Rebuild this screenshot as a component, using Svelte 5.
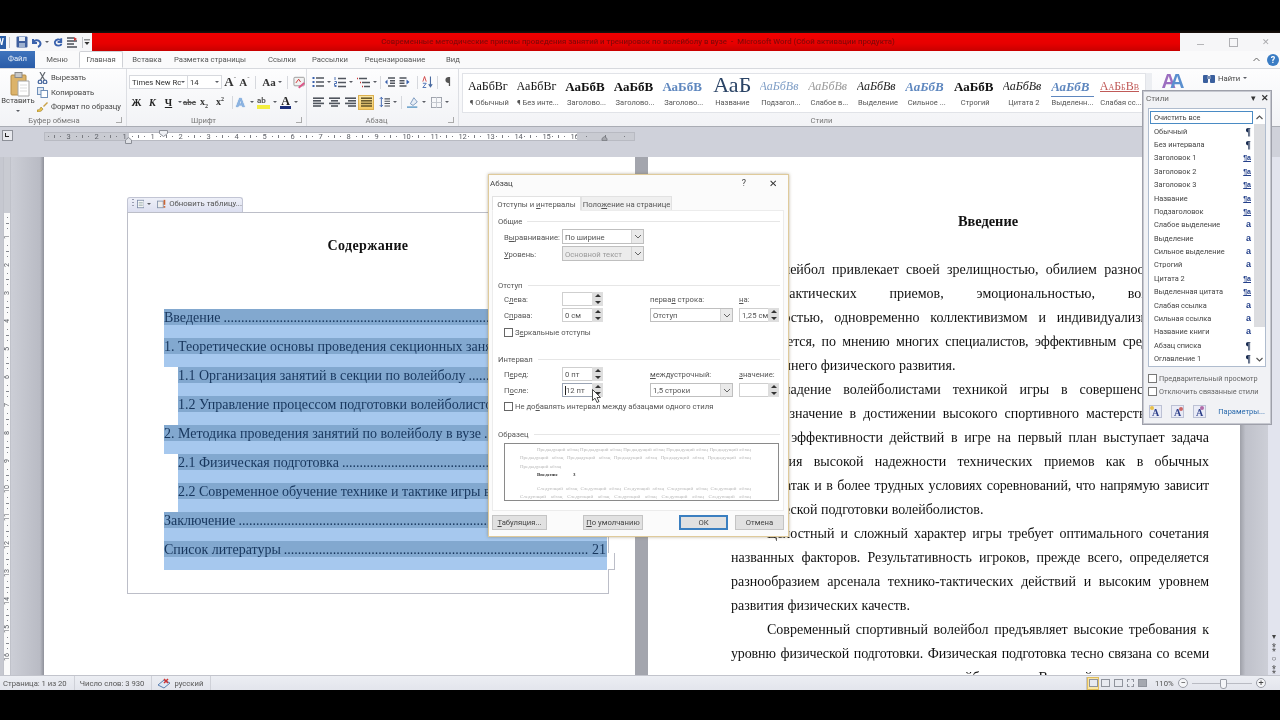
<script>
  const tabs = ['Меню', 'Главная', 'Вставка', 'Разметка страницы', 'Ссылки', 'Рассылки', 'Рецензирование', 'Вид'];
  const gallery = [
    ['АаБбВг', 'g-norm', '¶ Обычный'], ['АаБбВг', 'g-norm', '¶ Без инте...'],
    ['АаБбВ', 'g-bold', 'Заголово...'], ['АаБбВ', 'g-bold', 'Заголово...'],
    ['АаБбВ', 'g-blue', 'Заголово...'], ['АаБ', 'g-title', 'Название'],
    ['АаБбВв', 'g-sub', 'Подзагол...'], ['АаБбВв', 'g-weak', 'Слабое в...'],
    ['АаБбВв', 'g-em', 'Выделение'], ['АаБбВ', 'g-strong', 'Сильное ...'],
    ['АаБбВ', 'g-bold', 'Строгий'], ['АаБбВв', 'g-em', 'Цитата 2'],
    ['АаБбВ', 'g-quote', 'Выделенн...'], ['АаБбВв', 'g-ref', 'Слабая сс...']
  ];
  const rulerLeft = [3, 2, 1];
  const rulerMain = Array.from({ length: 16 }, (_, i) => i + 1);
  const vertical = Array.from({ length: 16 }, (_, i) => i + 1);
  const dots = '.'.repeat(130);
  const toc = [
    ['Введение', 0, '3'], ['1. Теоретические основы проведения секционных занятий', 0, '5'],
    ['1.1 Организация занятий в секции по волейболу', 1, '5'],
    ['1.2 Управление процессом подготовки волейболистов', 1, '8'],
    ['2. Методика проведения занятий по волейболу в вузе', 0, '11'],
    ['2.1 Физическая подготовка', 1, '11'],
    ['2.2 Современное обучение технике и тактике игры в волейбол', 1, '14'],
    ['Заключение', 0, '19'], ['Список литературы', 0, '21']
  ];
  const body = [
    ['Волейбол привлекает своей зрелищностью, обилием разнообразных и', 1, 1, 0],
    ['технико-тактических приемов, эмоциональностью, воздействием', 0, 1, 0],
    ['подвижностью, одновременно коллективизмом и индивидуализмом игры.', 0, 1, 0],
    ['Он считается, по мнению многих специалистов, эффективным средством для', 0, 1, 1],
    ['всестороннего физического развития.', 0, 0, 0],
    ['Овладение волейболистами техникой игры в совершенстве имеет', 1, 1, 0],
    ['большое значение в достижении высокого спортивного мастерства игроков.', 0, 1, 0],
    ['С целью эффективности действий в игре на первый план выступает задача', 0, 1, 0],
    ['достижения высокой надежности технических приемов как в обычных', 0, 1, 0],
    ['игровых атак и в более трудных условиях соревнований, что напрямую зависит', 0, 1, 1],
    ['от физической подготовки волейболистов.', 0, 0, 0],
    ['Целостный и сложный характер игры требует оптимального сочетания', 1, 1, 0],
    ['названных факторов. Результативность игроков, прежде всего, определяется', 0, 1, 0],
    ['разнообразием арсенала технико-тактических действий и высоким уровнем', 0, 1, 0],
    ['развития физических качеств.', 0, 0, 0],
    ['Современный спортивный волейбол предъявляет высокие требования к', 1, 1, 0],
    ['уровню физической подготовки. Физическая подготовка тесно связана со всеми', 0, 1, 1],
    ['другими сторонами тренировки волейболистов. Высокий уровень развития', 0, 1, 0]
  ];
  const styles = [
    ['Очистить все', ''], ['Обычный', 'p'], ['Без интервала', 'p'], ['Заголовок 1', 'l'], ['Заголовок 2', 'l'],
    ['Заголовок 3', 'l'], ['Название', 'l'], ['Подзаголовок', 'l'], ['Слабое выделение', 'a'], ['Выделение', 'a'],
    ['Сильное выделение', 'a'], ['Строгий', 'a'], ['Цитата 2', 'l'], ['Выделенная цитата', 'l'], ['Слабая ссылка', 'a'],
    ['Сильная ссылка', 'a'], ['Название книги', 'a'], ['Абзац списка', 'p'], ['Оглавление 1', 'p']
  ];
  const prev = 'Предыдущий абзац Предыдущий абзац Предыдущий абзац Предыдущий абзац Предыдущий абзац';
  const next = 'Следующий абзац Следующий абзац Следующий абзац Следующий абзац Следующий абзац';
</script>

{#snippet spin()}
  <span class="spin"><i class="up"></i><i class="down"></i></span>
{/snippet}
{#snippet chev()}
  <span class="chev"><svg width="8" height="5" viewBox="0 0 8 5"><path d="M1 1l3 3 3-3" fill="none" stroke="#666" stroke-width="1"/></svg></span>
{/snippet}
{#snippet align(kind)}
  <svg width="11" height="10" viewBox="0 0 11 10">
    {#each [0, 1, 2, 3] as i}
      <rect x={kind === 'c' ? (i % 2 ? 2 : 0) : kind === 'r' ? (i % 2 ? 3 : 0) : 0} y={i * 2.6 + 0.4} width={kind === 'j' ? 11 : i % 2 ? (kind === 'c' ? 7 : 8) : 11} height="1.6" fill={kind === 'j' ? '#6a5a2c' : '#50555e'}/>
    {/each}
  </svg>
{/snippet}

<div class="root">
  <div class="blackTop"></div>

  <header class="titlebar">
    <div class="qat">
      <span class="wlogo">W</span><i class="qsep q1"></i>
      <svg class="q2" width="12" height="12" viewBox="0 0 12 12"><rect x="0.5" y="0.5" width="11" height="11" rx="1" fill="#3f5f9e"/><rect x="3" y="1" width="6" height="4" fill="#e6ebf3"/><rect x="3" y="7" width="6" height="4" fill="#9db0cf"/></svg>
      <svg class="q3" width="12" height="12" viewBox="0 0 12 12"><path d="M3 3v4h4M3 7c1-3 5-4 7-1 1 2 0 4-2 5" fill="none" stroke="#3a62ad" stroke-width="2"/></svg>
      <i class="caret dark q4"></i>
      <svg class="q5" width="11" height="12" viewBox="0 0 12 12"><path d="M9 2v4H5M9 5C7 2 3 3 2 6c0 2 1 4 4 4 2 0 3-1 3-2" fill="none" stroke="#3a62ad" stroke-width="2"/></svg>
      <svg class="q3" width="12" height="12" viewBox="0 0 12 12"><path d="M1 2h7M1 5h10M1 8h7M1 11h10" stroke="#4a4f58" stroke-width="1.3"/><path d="M8 1l3 2-3 2z" fill="#c33"/></svg>
      <i class="qsep q6"></i>
      <svg class="q7" width="6" height="8" viewBox="0 0 7 8"><path d="M0 1h7v1H0zM0.5 4h6L3.5 7.5z" fill="#333"/></svg>
    </div>
    <div class="redbar">Современные методические приемы проведения занятий и тренировок по волейболу в вузе  -  Microsoft Word (Сбой активации продукта)</div>
    <div class="winbtns">
      <span class="wb min"></span>
      <span class="wb max"></span>
      <span class="wb cls">✕</span>
    </div>
  </header>

  <nav class="tabs">
    <span class="file">Файл</span>
    {#each tabs as t, i}
      <span class="tab t{i}" class:active={t === 'Главная'}>{t}</span>
    {/each}
    <span class="helpzone"><svg width="7" height="5" viewBox="0 0 7 5"><path d="M0.5 4L3.5 1l3 3" fill="none" stroke="#666"/></svg><span class="help">?</span></span>
  </nav>

  <section class="ribbon">
    <div class="grp clip">
      <div class="grpbody clipbody">
        <div class="paste">
          <svg width="20" height="26" viewBox="0 0 20 26"><rect x="1" y="3" width="15" height="20" rx="1" fill="#dcb36a" stroke="#b58b45"/><rect x="5" y="0.5" width="7" height="5" fill="#c7c7c7" stroke="#8a8a8a"/><path d="M8 9h11v15H8z" fill="#fff" stroke="#a5a5a5"/><path d="M10 13h7M10 16h7M10 19h7" stroke="#ddd"/></svg>
          <span>Вставить</span>
          <i class="caret dark"></i>
        </div>
        <div class="clipcol">
          <span class="ci"><svg width="11" height="12" viewBox="0 0 11 12"><circle cx="3" cy="10" r="1.8" fill="none" stroke="#4a6aa0" stroke-width="1.3"/><circle cx="8" cy="10" r="1.8" fill="none" stroke="#4a6aa0" stroke-width="1.3"/><path d="M3.5 8L8 0M7.5 8L3 0" stroke="#60666e" stroke-width="1.2"/></svg>Вырезать</span>
          <span class="ci"><svg width="11" height="11" viewBox="0 0 11 11"><rect x="0.5" y="0.5" width="6" height="7" fill="#dfe8f4" stroke="#6f8fb8"/><rect x="4" y="3.5" width="6.5" height="7" fill="#fff" stroke="#6f8fb8"/></svg>Копировать</span>
          <span class="ci"><svg width="11" height="11" viewBox="0 0 11 11"><path d="M6 5l4-4 1 1-4 4z" fill="#c9a24a"/><path d="M0 9c2 0 3-1 4-3l2 2c-1 2-3 3-6 3z" fill="#e8c14a" stroke="#8a6d20" stroke-width="0.5"/></svg>Формат по образцу</span>
        </div>
      </div>
      <div class="grplabel">Буфер обмена<i class="launch"></i></div>
    </div>

    <div class="grp font">
      <div class="grpbody col">
        <div class="row f1">
          <span class="combo fname">Times New Rc<i class="caret dark"></i></span>
          <span class="combo fsize">14<i class="caret dark"></i></span>
          <span class="bigA">A<sup>ˆ</sup></span>
          <span class="smA">A<sup>ˇ</sup></span>
          <i class="vsep m3"></i>
          <span class="aa">Aa<i class="caret dark"></i></span>
          <i class="vsep m3"></i>
          <svg class="clr" width="14" height="13" viewBox="0 0 14 13"><rect x="1" y="1" width="11" height="9" rx="1" fill="#f2f2f2" stroke="#999"/><path d="M3 7l3-4 2 3" fill="none" stroke="#c33"/><path d="M6 12l6-5" stroke="#d58" stroke-width="2"/></svg>
        </div>
        <div class="row f2">
          <b class="fb">Ж</b><b class="fb it">К</b><b class="fb un">Ч</b><i class="caret dark"></i>
          <span class="abc">abe</span><span class="xs">x<sub>2</sub></span><span class="xs">x<sup>2</sup></span>
          <i class="vsep"></i>
          <span class="eff">A</span><i class="caret dark"></i>
          <span class="hl">ab<i></i></span><i class="caret dark"></i>
          <span class="fcol">A<i></i></span><i class="caret dark"></i>
        </div>
      </div>
      <div class="grplabel">Шрифт<i class="launch"></i></div>
    </div>

    <div class="grp para">
      <div class="grpbody col">
        <div class="row pr1">
          <span class="pi w22"><svg width="12" height="10" viewBox="0 0 12 10"><path d="M4 1h8M4 5h8M4 9h8" stroke="#50555e" stroke-width="1.5"/><path d="M0.5 1h2M0.5 5h2M0.5 9h2" stroke="#3a62ad" stroke-width="2"/></svg><i class="caret dark"></i></span>
          <span class="pi w23"><svg width="12" height="11" viewBox="0 0 12 11"><path d="M4 1.5h8M4 5.5h8M4 9.5h8" stroke="#50555e" stroke-width="1.5"/><path d="M1 0v3M0.5 4.5h2v2h-2v2h2M0.5 9.5h2" stroke="#3a62ad" stroke-width="0.9" fill="none"/></svg><i class="caret dark"></i></span>
          <span class="pi w23"><svg width="13" height="11" viewBox="0 0 13 11"><path d="M2 1.5h8M5 5.5h8M7 9.5h6" stroke="#50555e" stroke-width="1.5"/><path d="M0 1.5h1M3 5.5h1M5 9.5h1" stroke="#c33" stroke-width="1.5"/></svg><i class="caret dark"></i></span>
          <i class="vsep"></i>
          <span class="pi dec"><svg width="10" height="10" viewBox="0 0 10 10"><path d="M3 1h7M5 3.7h5M5 6.3h5M3 9h7" stroke="#50555e" stroke-width="1.4"/><path d="M0 5l2.5-2.5v5z" fill="#3a62ad"/></svg></span>
          <span class="pi inc"><svg width="11" height="10" viewBox="0 0 10 10"><path d="M0 1h7M0 3.7h5M0 6.3h5M0 9h7" stroke="#50555e" stroke-width="1.4"/><path d="M10 5L7 2.5v5z" fill="#3a62ad"/></svg></span>
          <i class="vsep v2"></i>
          <svg class="sortic" width="11" height="14" viewBox="0 0 13 15"><path d="M10 1v12M8 10l2 3 2-3" fill="none" stroke="#4a6aa0" stroke-width="1.3"/><path d="M1 7l2-6 2 6" fill="none" stroke="#c33"/><path d="M1 9h4l-4 5h4" fill="none" stroke="#3a62ad"/></svg>
          <i class="vsep sv"></i>
          <span class="pil">¶</span>
        </div>
        <div class="row pr2">
          <span class="pi w16">{@render align('l')}</span>
          <span class="pi w16">{@render align('c')}</span>
          <span class="pi w16">{@render align('r')}</span>
          <span class="pi w16 on">{@render align('j')}</span>
          <span class="pi sp"><svg width="11" height="12" viewBox="0 0 14 14"><path d="M3 1v12M1 3l2-2 2 2M1 11l2 2 2-2" fill="none" stroke="#3a62ad" stroke-width="1.2"/><path d="M7 3h7M7 6h7M7 9h7M7 12h7" stroke="#50555e" stroke-width="1.4"/></svg><i class="caret dark"></i></span>
          <i class="vsep"></i>
          <span class="pi sh"><svg width="12" height="12" viewBox="0 0 14 14"><path d="M4 9l4-7 4 5-5 4z" fill="#e8eef6" stroke="#6f8fb8"/><rect x="0" y="12" width="12" height="2" fill="#78a9cf"/></svg><i class="caret dark"></i></span>
          <span class="pi bd"><svg width="11" height="11" viewBox="0 0 12 12"><rect x="0.5" y="0.5" width="11" height="11" fill="none" stroke="#9a9fa8"/><path d="M6 0v12M0 6h12" stroke="#c0c4cc"/></svg><i class="caret dark"></i></span>
        </div>
      </div>
      <div class="grplabel">Абзац<i class="launch"></i></div>
    </div>

    <div class="grp stylesgrp">
      <div class="galrow">
        <div class="gallery">
          {#each gallery as [s, c, l]}
            <div class="gi"><span class="gs {c}">{s}</span><span class="gl">{l}</span></div>
          {/each}
        </div>
        <div class="gscroll"></div>
        <div class="chg"><span class="chgA">A</span><span class="chgB">A</span></div>
        <div class="find"><svg width="12" height="10" viewBox="0 0 12 10"><rect x="0" y="2" width="5" height="8" rx="1" fill="#3a5f9e"/><rect x="7" y="2" width="5" height="8" rx="1" fill="#3a5f9e"/><rect x="4" y="3" width="4" height="3" fill="#7a8fb5"/></svg>Найти<i class="caret dark"></i></div>
      </div>
      <div class="grplabel slabel">Стили</div>
    </div>
  </section>

  <div class="band">
    <span class="tabstop"><i></i></span>
    <div class="ruler">
      {#each rulerLeft as n}
        <span class="cell gray"><i></i><i class="lg"></i><i></i><b>{n}</b></span>
      {/each}
      {#each rulerMain as n}
        <span class="cell"><i></i><i class="lg"></i><i></i><b>{n}</b></span>
      {/each}
      <span class="cell gray last"><i></i><i class="lg"></i><i></i></span>
      <svg class="firstline" width="9" height="7" viewBox="0 0 9 7"><path d="M0.5 0.5h8v3l-4 3-4-3z" fill="#eceef2" stroke="#8b8e96"/></svg>
      <svg class="hanging" width="7" height="7" viewBox="0 0 7 7"><path d="M3.5 0.5l3 2.5v3.5h-6V3z" fill="#dfe1e6" stroke="#8b8e96"/></svg>
      <svg class="rightind" width="7" height="5" viewBox="0 0 7 6"><path d="M3.5 0.5l3 2.5v2.5h-6V3z" fill="#a5a7ad" stroke="#77797f"/></svg>
    </div>
  </div>

  <main class="work">
    <div class="vruler">
      {#each vertical as n}<span class="vcell"><i></i><i class="lg"></i><i></i><b>{n}</b></span>{/each}
    </div>
    <div class="gutter left"></div>
    <article class="page p1">
      <div class="frame">
        <div class="handle">
          <span class="dots"></span>
          <svg width="9" height="10" viewBox="0 0 9 10"><rect x="0.5" y="0.5" width="8" height="9" fill="#fff" stroke="#7b8aa5"/><path d="M2 3h5M2 5h5M2 7h5" stroke="#9aa"/></svg>
          <i class="caret dark"></i>
          <svg class="warn" width="11" height="10" viewBox="0 0 11 10"><rect x="0.5" y="1.5" width="7" height="8" fill="#eee" stroke="#8090a8"/><rect x="8" y="0" width="2" height="6" fill="#c63"/><rect x="8" y="7.5" width="2" height="2" fill="#c63"/></svg>
          <span>Обновить таблицу...</span>
        </div>
        <h2>Содержание</h2>
        <div class="toc">
          {#each toc as [t, ind, n]}
            <div class="tr" class:ind={ind}><div class="band2"><span>{t}</span><span class="leader">{dots}</span><span class="num">{n}</span></div></div>
          {/each}
        </div>
        <div class="notch"></div>
      </div>
    </article>
    <div class="midgap"></div>
    <article class="page p2">
      <h2>Введение</h2>
      {#each body as [t, ind, j, tight]}
        <p class="ln" class:ind={ind} class:j={j} class:tight={tight}>{t}</p>
      {/each}
    </article>
    <div class="gutter right"></div>
    <aside class="vscroll">
      <span class="sb">▾</span><span class="sb">⁑</span><span class="sb">○</span><span class="sb">⁑</span>
    </aside>
  </main>

  <footer class="status">
    <span class="st">Страница: 1 из 20</span>
    <span class="st">Число слов: 3 930</span>
    <span class="st lang">
      <svg width="14" height="11" viewBox="0 0 14 11"><path d="M1 7l6-5 6 3-6 5z" fill="#dfe8f4" stroke="#5a7fb0"/><path d="M7 1l4 4M11 1L7 5" stroke="#c33" stroke-width="1.5"/></svg>
      <span>русский</span>
    </span>
    <span class="stspace"></span>
    <div class="views">
      <span class="vw on"><i></i></span><span class="vw"><i></i></span><span class="vw"><i></i></span><span class="vw"><i class="s"></i></span><span class="vw"><i class="d"></i></span>
    </div>
    <span class="zoomv">110%</span>
    <span class="zbtn">−</span>
    <span class="slider"><i></i></span>
    <span class="zbtn">+</span>
    <span class="grip"></span>
  </footer>
  <div class="blackBottom"></div>

  <div class="dialog">
    <div class="dtitle"><span>Абзац</span><span class="dq">?</span><span class="dx">✕</span></div>
    <div class="dtabs"><span class="dtab on">Отступы и <u>и</u>нтервалы</span><span class="dtab">Поло<u>ж</u>ение на странице</span></div>
    <div class="dpanel">
      <section class="sec s1">
        <div class="head"><span>Общие</span><i></i></div>
        <div class="form">
          <label>В<u>ы</u>равнивание:</label>
          <span class="sel wide">По ширине{@render chev()}</span>
          <label><u>У</u>ровень:</label>
          <span class="sel wide dis">Основной текст{@render chev()}</span>
        </div>
      </section>
      <section class="sec s2">
        <div class="head"><span>Отступ</span><i></i></div>
        <div class="form f4">
          <label>С<u>л</u>ева:</label>
          <span class="num2">{@render spin()}</span>
          <label class="c3">перва<u>я</u> строка:</label>
          <label class="c4"><u>н</u>а:</label>
          <label>С<u>п</u>рава:</label>
          <span class="num2">0 см{@render spin()}</span>
          <span class="sel c3">Отступ{@render chev()}</span>
          <span class="num2 c4">1,25 см{@render spin()}</span>
          <span class="check"><i></i><span>З<u>е</u>ркальные отступы</span></span>
        </div>
      </section>
      <section class="sec s3">
        <div class="head"><span>Интервал</span><i></i></div>
        <div class="form f4">
          <label>П<u>е</u>ред:</label>
          <span class="num2">0 пт{@render spin()}</span>
          <label class="c3"><u>м</u>еждустрочный:</label>
          <label class="c4"><u>з</u>начение:</label>
          <label>П<u>о</u>сле:</label>
          <span class="num2 focus"><em></em>12 пт{@render spin()}</span>
          <span class="sel c3">1,5 строки{@render chev()}</span>
          <span class="num2 c4">{@render spin()}</span>
          <span class="check"><i></i><span>Не до<u>б</u>авлять интервал между абзацами одного стиля</span></span>
        </div>
      </section>
      <section class="sec s4">
        <div class="head"><span>Образец</span><i></i></div>
        <div class="preview">
          <p class="pv first">{prev}</p>
          <p class="pv">{prev}</p>
          <p class="pv plain">Предыдущий абзац</p>
          <p class="pv cur"><b>Введение</b><b>3</b></p>
          <p class="pv first">{next}</p>
          <p class="pv">{next}</p>
        </div>
      </section>
    </div>
    <div class="dbtns">
      <button class="b1"><u>Т</u>абуляция...</button>
      <button class="b2"><u>П</u>о умолчанию</button>
      <span class="bspace"></span>
      <button class="b3 ok">ОК</button>
      <button class="b3">Отмена</button>
    </div>
    <svg class="cursor" width="9" height="14" viewBox="0 0 9 14"><path d="M0.5 0.5v11l2.5-2.3 2 4.3 2-1-2-4h3.5z" fill="#fff" stroke="#222" stroke-width="0.8"/></svg>
  </div>

  <div class="stylespanel">
    <div class="sp-head"><span>Стили</span><span class="sp-btn">▾</span><span class="sp-btn x">✕</span></div>
    <div class="sp-list">
      <div class="sp-items">
        {#each styles as [n, k], i}
          <div class="sp-item" class:sel0={i === 0}>
            <span>{n}</span>
            {#if k === 'p'}<b class="mk">¶</b>{:else if k === 'a'}<b class="mk blue">a</b>{:else if k === 'l'}<b class="mk blue lnk">¶a</b>{/if}
          </div>
        {/each}
      </div>
      <div class="sp-scroll">
        <span class="arr"><svg width="7" height="5" viewBox="0 0 7 5"><path d="M0.5 4L3.5 1l3 3" fill="none" stroke="#555" stroke-width="1.2"/></svg></span>
        <span class="thumb"></span>
        <span class="arr"><svg width="7" height="5" viewBox="0 0 7 5"><path d="M0.5 1l3 3 3-3" fill="none" stroke="#555" stroke-width="1.2"/></svg></span>
      </div>
    </div>
    <div class="sp-check first"><i></i><span>Предварительный просмотр</span></div>
    <div class="sp-check"><i></i><span>Отключить связанные стили</span></div>
    <div class="sp-foot">
      <span class="sb2 n1">A</span><span class="sb2 n2">A</span><span class="sb2 n3">A</span>
      <span class="link">Параметры...</span>
    </div>
  </div>
</div>

<style>
  :global(body) { margin: 0; background: #000; }
  .root {
    position: relative; width: 1280px; height: 720px; overflow: hidden; display: flex; flex-direction: column;
    font-family: Roboto, "Noto Sans", sans-serif; font-size: 7.7px; color: #444; background: #000; filter: blur(0.35px);
  }
  i { display: block; font-style: normal; }
  .blackTop { height: 33px; background: linear-gradient(#000 90%, #1c120e); flex: none; }
  .blackBottom { height: 30px; background: #000; flex: none; }

  .titlebar { height: 18px; display: flex; flex: none; background: #f6f6f8; }
  .qat { width: 92px; display: flex; align-items: center; overflow: hidden; flex: none; }
  .wlogo { width: 12px; margin-left: -6px; height: 13px; background: #2d5ea6; color: #fff; font-size: 9px; font-weight: 700; text-align: center; line-height: 13px; flex: none; }
  .qsep { width: 1px; height: 11px; background: #c2c4c9; flex: none; }
  .q1 { margin-left: 3px; }
  .q2 { margin-left: 6px; flex: none; }
  .q3 { margin-left: 2px; flex: none; }
  .q4 { margin-left: 3px; }
  .q5 { margin-left: 4px; flex: none; }
  .q6 { margin-left: 4px; }
  .q7 { margin-left: 1px; flex: none; }
  .redbar {
    width: 1088px; flex: none; background: linear-gradient(#f40000, #e60000 60%, #c80000); color: #870707;
    font-size: 7.85px; text-align: center; line-height: 17px; white-space: pre; font-weight: 500; padding-left: 4px; box-sizing: border-box;
  }
  .winbtns { flex: 1; display: flex; justify-content: flex-end; align-items: center; padding-right: 11px; gap: 24px; }
  .wb { width: 7px; height: 7px; display: block; color: #a8a8ac; font-size: 9px; line-height: 7px; }
  .wb.min { border-bottom: 1px solid #b5b5b8; height: 4px; margin-right: 1px; }
  .wb.max { border: 1px solid #b0b0b4; }

  .tabs { height: 17px; flex: none; position: relative; display: flex; align-items: center; background: #fafafb; white-space: nowrap; z-index: 1; }
  .file { width: 35px; height: 17px; background: linear-gradient(#3f74bd, #2a5ca8); color: #e8f0fa; text-align: center; line-height: 16px; flex: none; }
  .tab { flex: none; display: flex; justify-content: center; color: #555; }
  .t0 { width: 44px; }
  .t1 { width: 44px; height: 17px; line-height: 16px; border: 1px solid #cfd1d6; border-bottom: 1px solid #fff; box-sizing: border-box; background: #fff; border-radius: 2px 2px 0 0; }
  .t2 { width: 48px; }
  .t3 { width: 78px; }
  .t4 { width: 66px; }
  .t5 { width: 30px; }
  .t6 { width: 100px; }
  .t7 { width: 16px; }
  .helpzone { margin-left: auto; display: flex; align-items: center; gap: 7px; padding-right: 1px; }
  .help { width: 12px; height: 12px; border-radius: 50%; background: #3a7cc4; color: #fff; font-size: 9px; font-weight: 700; text-align: center; line-height: 12px; }

  .ribbon { height: 59px; flex: none; display: flex; background: linear-gradient(#fdfdfe, #f2f3f6); border-top: 1px solid #d7d9de; border-bottom: 1px solid #a9acb4; box-sizing: border-box; }
  .grp { display: flex; flex-direction: column; flex: none; border-right: 1px solid #dddfe4; box-sizing: border-box; }
  .clip { width: 127px; }
  .font { width: 180px; }
  .para { width: 152px; }
  .stylesgrp { flex: 1; border: none; min-width: 0; }
  .grpbody { flex: 1; min-height: 0; }
  .grplabel { height: 13px; text-align: center; color: #777; position: relative; line-height: 15px; flex: none; }
  .clip .grplabel { padding-right: 18px; }
  .font .grplabel { padding-right: 26px; }
  .para .grplabel { padding-right: 12px; }
  .launch { position: absolute; right: 4px; bottom: 3px; width: 5px; height: 5px; border-right: 1px solid #aaa; border-bottom: 1px solid #aaa; }
  .clipbody { display: flex; padding-top: 3px; }
  .paste { width: 32px; margin-left: 2px; display: flex; flex-direction: column; align-items: center; flex: none; color: #444; }
  .paste svg { margin-left: 3px; }
  .paste span { margin-top: -2px; }
  .paste .caret { margin-top: 5px; }
  .clipcol { display: flex; flex-direction: column; gap: 1.5px; margin-left: 3px; margin-top: -1px; }
  .ci { display: flex; align-items: center; gap: 3px; height: 13px; white-space: nowrap; }
  .caret { width: 0; height: 0; border-left: 2px solid transparent; border-right: 2px solid transparent; border-top: 2px solid #8a8d94; flex: none; }
  .caret.dark { border-top-color: #5a5d64; }
  .col { display: flex; flex-direction: column; padding-top: 5px; gap: 4px; }
  .row { display: flex; align-items: center; height: 16px; }
  .f1 { padding-left: 2px; gap: 2px; }
  .combo { height: 14px; border: 1px solid #d7d9de; background: #fff; box-sizing: border-box; display: flex; align-items: center; justify-content: space-between; padding: 0 2px; color: #333; font-size: 7.7px; white-space: nowrap; }
  .fname { width: 59px; margin-right: -3px; }
  .fsize { width: 37px; }
  .bigA, .smA { font-family: "Liberation Serif", serif; color: #333; font-weight: 700; font-size: 13px; line-height: 12px; flex: none; width: 13px; }
  .smA { font-size: 11px; width: 11px; }
  .bigA sup, .smA sup { font-size: 7px; color: #7a7a7a; line-height: 0; }
  .vsep { width: 1px; height: 13px; background: #d6d8dd; flex: none; }
  .m3 { margin-left: 3px; }
  .aa { display: flex; align-items: center; gap: 2px; font-family: "Liberation Serif", serif; font-weight: 700; color: #333; font-size: 11px; margin-left: 4px; }
  .clr { margin-left: 3px; }
  .f2 { padding-left: 3px; gap: 3px; }
  .fb { font-family: "Liberation Serif", serif; width: 13px; text-align: center; font-size: 10px; color: #222; flex: none; }
  .fb.it { font-style: italic; }
  .fb.un { text-decoration: underline; }
  .abc { color: #555; font-size: 8px; font-weight: 700; text-decoration: line-through; width: 15px; margin-left: -3px; flex: none; text-align: center; }
  .xs { color: #333; font-size: 10px; font-weight: 700; width: 13px; font-family: "Liberation Serif", serif; flex: none; }
  .xs sub, .xs sup { font-size: 6px; }
  .eff { color: #8db4e2; font-size: 13px; font-weight: 700; text-shadow: 0 0 1px #3a7cc4; width: 11px; flex: none; }
  .hl { color: #555; font-size: 8px; font-weight: 700; width: 13px; position: relative; line-height: 9px; flex: none; }
  .hl i { height: 4px; background: #f4ee40; }
  .fcol { color: #222; font-family: "Liberation Serif", serif; font-size: 12px; font-weight: 700; width: 11px; line-height: 10px; text-align: center; flex: none; }
  .fcol i { height: 3px; background: #1a2e7a; }
  .pr1 { padding-left: 5px; }
  .pr2 { padding-left: 3px; }
  .pi { display: flex; align-items: center; gap: 3px; height: 15px; box-sizing: border-box; flex: none; }
  .w22 { width: 22px; }
  .w23 { width: 23px; }
  .dec { width: 17px; padding-left: 4px; }
  .inc { width: 17px; padding-left: 1px; }
  .v2 { margin-left: 2px; }
  .w16 { width: 16px; justify-content: center; }
  .pi.on { background: linear-gradient(#fbe7a4, #f4c964); border: 1px solid #dcb04f; }
  .sp { margin-left: 5px; width: 20px; }
  .pr2 .vsep { margin-left: 2px; }
  .sh { margin-left: 5px; width: 22px; }
  .bd { margin-left: 2px; }
  .sortic { margin-left: 4px; flex: none; }
  .sv { margin-left: 4px; }
  .pil { font-size: 12px; font-weight: 700; color: #555; margin-left: 7px; }

  .galrow { flex: 1; display: flex; padding-top: 4px; padding-left: 3px; align-items: flex-start; min-height: 0; }
  .gallery { width: 684px; height: 40px; display: flex; background: #fff; border: 1px solid #e1e3e8; box-sizing: border-box; flex: none; padding-left: 2px; }
  .gi { width: 48.6px; height: 38px; flex: none; display: flex; flex-direction: column; align-items: center; overflow: hidden; box-sizing: border-box; padding: 0 3px; }
  .gs { font-family: "Liberation Serif", serif; height: 23px; line-height: 25px; font-size: 12px; white-space: nowrap; overflow: hidden; width: 100%; color: #111; }
  .gl { font-size: 7.5px; white-space: nowrap; color: #555; line-height: 11px; }
  .g-bold { font-weight: 700; font-size: 13px; }
  .g-blue { font-weight: 700; color: #5e87bf; font-size: 13px; }
  .g-title { font-size: 22px; line-height: 22px; color: #2b4466; text-align: center; }
  .g-sub { font-style: italic; color: #7f9ec6; }
  .g-weak { font-style: italic; color: #9a9a9a; }
  .g-em { font-style: italic; color: #222; }
  .g-strong { font-weight: 700; font-style: italic; color: #5e87bf; font-size: 13px; }
  .g-quote { font-weight: 700; font-style: italic; color: #5e87bf; font-size: 13px; border-bottom: 1px solid #5e87bf; height: 22px; }
  .g-ref { color: #c05a58; font-variant: small-caps; text-decoration: underline; }
  .gscroll { width: 6px; height: 40px; background: #eceef2; flex: none; }
  .chg { width: 42px; flex: none; text-align: center; font-size: 20px; font-weight: 700; font-family: "Liberation Sans", sans-serif; line-height: 18px; margin-top: -1px; }
  .chgA { color: #9c6ec0; }
  .chgB { color: #5a8fcf; margin-left: -6px; }
  .find { display: flex; align-items: center; gap: 3px; color: #444; white-space: nowrap; margin-left: 9px; }
  .slabel { padding-right: 96px; }

  .band { height: 30px; flex: none; background: #cfd1da; position: relative; padding-left: 44px; padding-top: 5px; box-sizing: border-box; }
  .tabstop { position: absolute; left: 2px; top: 3px; width: 11px; height: 11px; border: 1px solid #8d9098; box-sizing: border-box; background: #e8e9ee; }
  .tabstop i { width: 3px; height: 3px; border-left: 1px solid #222; border-bottom: 1px solid #222; margin: 2px; }
  .ruler { position: relative; display: flex; width: 591px; height: 9px; background: #fff; border: 1px solid #b8bac2; box-sizing: border-box; }
  .cell { width: 28px; flex: none; display: flex; align-items: center; justify-content: space-around; font-size: 7.5px; color: #5c5f66; }
  .cell.gray { background: #c9cbd2; }
  .cell.last { flex: 1; width: auto; }
  .cell i { width: 1px; height: 1px; background: #7a7c82; }
  .cell i.lg { height: 3px; }
  .cell b { font-weight: 400; width: 4px; text-align: center; line-height: 7px; }
  .firstline { position: absolute; left: 114px; top: -3px; }
  .hanging { position: absolute; left: 80px; top: 4px; }
  .rightind { position: absolute; left: 556px; top: 3px; }

  .work { height: 518px; flex: none; display: flex; background: #c6c8d0; overflow: hidden; position: relative; }
  .vruler { width: 8px; margin-left: 3px; flex: none; background: linear-gradient(#c9cbd2 56px, #fafafa 56px); display: flex; flex-direction: column; padding-top: 56px; box-sizing: border-box; border-left: 1px solid #c0c2ca; border-right: 1px solid #c0c2ca; overflow: hidden; }
  .vcell { height: 28px; flex: none; display: flex; flex-direction: column; justify-content: space-around; align-items: center; font-size: 7.2px; color: #5c5f66; box-sizing: border-box; padding-top: 2px; }
  .vcell i { width: 1px; height: 1px; background: #85878e; }
  .vcell i.lg { width: 3px; }
  .vcell b { font-weight: 400; writing-mode: vertical-rl; transform: rotate(180deg); line-height: 6px; height: 5px; display: flex; align-items: center; justify-content: center; white-space: nowrap; }
  .gutter.left { width: 33px; flex: none; background: linear-gradient(90deg, #ccced6, #b9bbc4 88%, #8f919a); }
  .page { background: #fff; flex: none; box-sizing: border-box; }
  .p1 { width: 591px; position: relative; padding: 55px 0 0 83px; }
  .midgap { width: 13px; flex: none; background: #a3a5ad; }
  .p2 { width: 592px; padding: 52px 31px 0 83px; font-family: "Liberation Serif", serif; font-size: 14px; color: #111; overflow: hidden; }
  .p2 h2 { margin: 0 0 25px; font-size: 14.4px; line-height: 24px; text-align: center; font-weight: 700; padding-left: 36px; }
  .ln { margin: 0; height: 24px; line-height: 24px; overflow: hidden; }
  .ln.ind { padding-left: 36px; }
  .ln.j { text-align: justify; text-align-last: justify; }
  .ln.tight { letter-spacing: -0.14px; word-spacing: -1.5px; }
  .gutter.right { flex: 1; background: linear-gradient(90deg, #9ea0a8, #bfc1ca 20%, #cdcfd7); }
  .vscroll { width: 12px; flex: none; background: #e2e4ee; display: flex; flex-direction: column; justify-content: flex-end; align-items: center; gap: 2px; padding-bottom: 1px; color: #444; font-size: 8px; line-height: 9px; }

  .frame { width: 482px; height: 382px; position: relative; border: 1px solid #bcbec8; box-sizing: border-box; }
  .handle { position: absolute; left: -1px; top: -16px; height: 15px; width: 116px; background: linear-gradient(#eef0f8, #dcdff0); border: 1px solid #c2c5d4; border-bottom: none; border-radius: 3px 3px 0 0; box-sizing: border-box; display: flex; align-items: center; gap: 3px; padding: 0 0 3px 4px; font-size: 7.8px; color: #555; white-space: nowrap; }
  .dots { width: 2px; height: 9px; background: repeating-linear-gradient(#9a9db0 0 1px, transparent 1px 3px); }
  .warn { margin-left: 3px; }
  .frame h2 { margin: 0; position: absolute; left: 0; right: 0; top: 23px; text-align: center; font-family: "Liberation Serif", serif; font-size: 14px; line-height: 20px; color: #111; letter-spacing: 0.35px; }
  .toc { position: absolute; left: 36px; top: 96px; width: 443px; font-family: "Liberation Serif", serif; font-size: 14px; color: #17365d; }
  .tr { height: 29px; background: #a6c8ee; }
  .tr.ind { margin-left: 14px; }
  .band2 { height: 16px; box-sizing: border-box; padding-top: 1px; line-height: 16px; background: #82a8cf; display: flex; white-space: nowrap; overflow: hidden; }
  .band2 span { flex: none; }
  .band2 .leader { flex: 1 1 0; min-width: 0; overflow: hidden; margin: 0 1px 0 3px; letter-spacing: 0; }
  .num { padding: 0 1px 0 3px; }
  .notch { position: absolute; right: -7px; top: 340px; width: 6px; height: 16px; border-right: 1px solid #bcbec8; border-bottom: 1px solid #bcbec8; background: #fff; }

  .status { height: 15px; flex: none; display: flex; align-items: center; background: linear-gradient(#eceef3, #e3e5ec); border-top: 1px solid #c2c4cc; box-sizing: border-box; color: #555; white-space: nowrap; position: relative; z-index: 1; }
  .st { display: flex; align-items: center; gap: 3px; padding: 0 7px 0 3px; height: 14px; border-right: 1px solid #cfd1d8; margin-right: 2px; box-sizing: border-box; }
  .lang { padding-left: 3px; }
  .stspace { flex: 1; }
  .views { display: flex; border-left: 1px solid #c2c4cc; margin-right: 6px; }
  .vw { width: 12.4px; height: 13px; display: flex; align-items: center; justify-content: center; box-sizing: border-box; flex: none; }
  .vw i { width: 7px; height: 6px; border: 1px solid #8f939c; background: #e8eaf0; }
  .vw i.s { width: 5px; border-style: dashed; }
  .vw i.d { background: #a5a8b0; }
  .vw.on { background: #f9e6a6; border: 1px solid #e0bd5e; }
  .zoomv { width: 23px; color: #555; }
  .zbtn { width: 10px; height: 10px; border-radius: 50%; border: 1px solid #9a9da6; background: #f5f6f8; font-size: 9px; line-height: 9px; text-align: center; color: #444; box-sizing: border-box; flex: none; }
  .slider { width: 60px; height: 1px; background: #b9bbc3; position: relative; margin: 0 4px; flex: none; }
  .slider i { position: absolute; left: 28px; top: -4px; width: 5px; height: 8px; background: #f4f5f8; border: 1px solid #9a9da6; border-radius: 1px 1px 3px 3px; }
  .grip { width: 14px; flex: none; }

  .dialog { position: absolute; left: 488px; top: 174px; width: 301px; height: 363px; background: #fbfbfb; border: 1px solid #dfca9b; box-sizing: border-box; display: flex; flex-direction: column; padding: 0 4px 0 3px; z-index: 3; box-shadow: 0 0 3px rgba(120,100,60,.5); font-size: 7.7px; color: #555; }
  .dtitle { height: 21px; flex: none; display: flex; align-items: center; color: #444; font-size: 8px; margin-left: -2px; padding-bottom: 5px; box-sizing: border-box; }
  .dq { margin-left: auto; margin-right: 23px; font-size: 9px; }
  .dx { margin-right: 7px; font-size: 10px; color: #333; }
  .dtabs { display: flex; height: 15px; flex: none; }
  .dtab { line-height: 15px; background: #f0f0f0; border: 1px solid #e2e2e2; box-sizing: border-box; height: 15px; white-space: nowrap; width: 91px; text-align: center; }
  .dtab.on { background: #fff; border-bottom-color: #fff; width: 89px; position: relative; z-index: 1; }
  .dpanel { flex: none; height: 301px; border: 1px solid #ececec; margin-top: -1px; background: #fff; box-sizing: border-box; padding: 4px 3px 0 5px; }
  .sec { box-sizing: border-box; }
  .s1 { height: 64px; }
  .s2 { height: 74px; }
  .s3 { height: 75px; }
  .head { height: 12px; display: flex; align-items: center; gap: 5px; color: #555; }
  .head i { flex: 1; height: 1px; background: #e6e6e6; }
  .form { display: grid; grid-template-columns: 58px 41px 47px 83px 6px 40px; grid-auto-rows: 14px; row-gap: 2px; margin-left: 6px; margin-top: 1px; align-items: center; }
  .s1 .form { grid-template-columns: 58px 82px; grid-auto-rows: 15px; margin-top: 2px; }
  .s3 .form { margin-top: 2px; }
  .form label { grid-column: 1; white-space: nowrap; padding-top: 1px; }
  .form .c3 { grid-column: 4; }
  .form .c4 { grid-column: 6; }
  .sel { height: 100%; border: 1px solid #bfbfbf; box-sizing: border-box; background: #fff; display: flex; align-items: center; padding: 1px 0 0 2px; position: relative; white-space: nowrap; }
  .sel.wide { grid-column: 2; }
  .sel.dis { background: #ececec; color: #999; }
  .chev { position: absolute; right: 0; top: 0; bottom: 0; width: 11px; background: #eaeaea; border-left: 1px solid #d4d4d4; display: flex; align-items: center; justify-content: center; }
  .num2 { height: 100%; grid-column: 2; border: 1px solid #cfcfcf; box-sizing: border-box; padding: 1px 0 0 2px; display: flex; align-items: center; position: relative; background: #fff; white-space: nowrap; }
  .num2 em { width: 1px; height: 9px; background: #222; }
  .num2.focus { border-color: #9aa4b4; }
  .spin { position: absolute; right: -1px; top: -1px; bottom: -1px; width: 11px; display: flex; flex-direction: column; background: #dedede; gap: 1px; padding: 1px 0; box-sizing: border-box; }
  .spin i { flex: 1; display: flex; align-items: center; justify-content: center; }
  .up::after { content: ""; border-left: 3px solid transparent; border-right: 3px solid transparent; border-bottom: 3px solid #333; }
  .down::after { content: ""; border-left: 3px solid transparent; border-right: 3px solid transparent; border-top: 3px solid #333; }
  .check { grid-column: 1 / -1; display: flex; align-items: center; gap: 2px; white-space: nowrap; }
  .s2 .check { margin-top: 3px; }
  .check i { width: 9px; height: 9px; border: 1px solid #666; box-sizing: border-box; background: #fff; flex: none; }
  .preview { margin: 3px 0 0 6px; width: 275px; height: 58px; box-sizing: border-box; border: 1px solid #8a8a8a; padding: 2px 27px 0 15px; overflow: hidden; font-size: 5px; color: #b9b9b9; font-family: "Liberation Serif", serif; line-height: 8.3px; }
  .pv { margin: 0; height: 8.3px; overflow: hidden; text-align: justify; text-align-last: justify; }
  .pv.plain { text-align-last: left; }
  .pv.first { padding-left: 17px; }
  .pv.cur { color: #333; padding: 0 0 6px 17px; height: auto; display: flex; gap: 15px; text-align-last: left; }
  .dbtns { display: flex; padding-top: 4px; }
  button { font: inherit; color: #444; background: #e1e1e1; border: 1px solid #c4c4c4; height: 15px; padding: 0; box-sizing: border-box; }
  .b1 { width: 55px; margin-right: 36px; }
  .b2 { width: 60px; }
  .bspace { flex: 1; }
  .b3 { width: 49px; margin-left: 7px; }
  .b3.ok { border: 1px solid #3b7fc0; box-shadow: inset 0 0 0 1px #3b7fc0; margin-left: 0; }
  .cursor { position: absolute; left: 103px; top: 214px; }

  .stylespanel { position: absolute; left: 1142px; top: 90px; width: 130px; height: 335px; background: #f1f2f5; border: 1px solid #9ea0aa; box-shadow: inset 0 0 0 1px #c6c8d0; box-sizing: border-box; padding: 0 5px; z-index: 3; display: flex; flex-direction: column; color: #444; font-size: 7.4px; }
  .sp-head { display: flex; align-items: center; height: 14px; flex: none; color: #666; font-size: 8px; margin: 0 -3px 3px -2px; gap: 5px; }
  .sp-head span:first-child { flex: 1; }
  .sp-btn { color: #333; font-size: 9px; line-height: 10px; }
  .sp-btn.x { font-weight: 700; }
  .sp-list { height: 259px; flex: none; background: #fff; border: 1px solid #afbcce; box-sizing: border-box; display: flex; padding: 2px 0 0 1px; }
  .sp-items { flex: 1; min-width: 0; }
  .sp-item { height: 13.4px; display: flex; align-items: center; justify-content: space-between; padding: 0 2px 0 4px; box-sizing: border-box; white-space: nowrap; color: #444; }
  .sel0 { border: 1.5px solid #4a8bc4; padding-left: 3px; }
  .mk { color: #16294f; font-family: "Liberation Serif", serif; font-size: 10px; line-height: 9px; }
  .mk.blue { color: #24408a; font-family: "Liberation Sans", sans-serif; font-size: 9px; }
  .mk.lnk { text-decoration: underline; font-size: 7px; }
  .sp-scroll { width: 12px; flex: none; display: flex; flex-direction: column; align-items: center; }
  .arr { height: 13px; display: flex; align-items: center; flex: none; }
  .thumb { flex: 1; width: 11px; background: #dcdde0; margin-bottom: 26px; }
  .sp-check { height: 13px; flex: none; display: flex; align-items: center; gap: 2px; color: #666; white-space: nowrap; font-size: 7.3px; }
  .sp-check.first { margin-top: 5px; }
  .sp-check i { width: 9px; height: 9px; flex: none; border: 1px solid #777; box-sizing: border-box; background: #fff; }
  .sp-foot { display: flex; align-items: center; gap: 9px; margin-top: 7px; padding-left: 1px; }
  .sb2 { width: 13px; height: 13px; text-align: center; line-height: 13px; background: #e9ebf6; border: 1px solid #bcc1d4; box-sizing: border-box; color: #2d3f8a; font-weight: 700; font-size: 10px; font-family: "Liberation Serif", serif; position: relative; }
  .sb2::after { content: ""; position: absolute; width: 4px; height: 4px; border-radius: 50%; }
  .n1::after { left: 0; top: 0; background: #e8c14a; }
  .n2::after { right: 0; top: 1px; background: #c66; }
  .n3::after { right: 1px; top: 0; background: #b06aa8; }
  .link { margin-left: auto; margin-right: 1px; color: #2a6aad; white-space: nowrap; font-size: 7.5px; }
</style>
